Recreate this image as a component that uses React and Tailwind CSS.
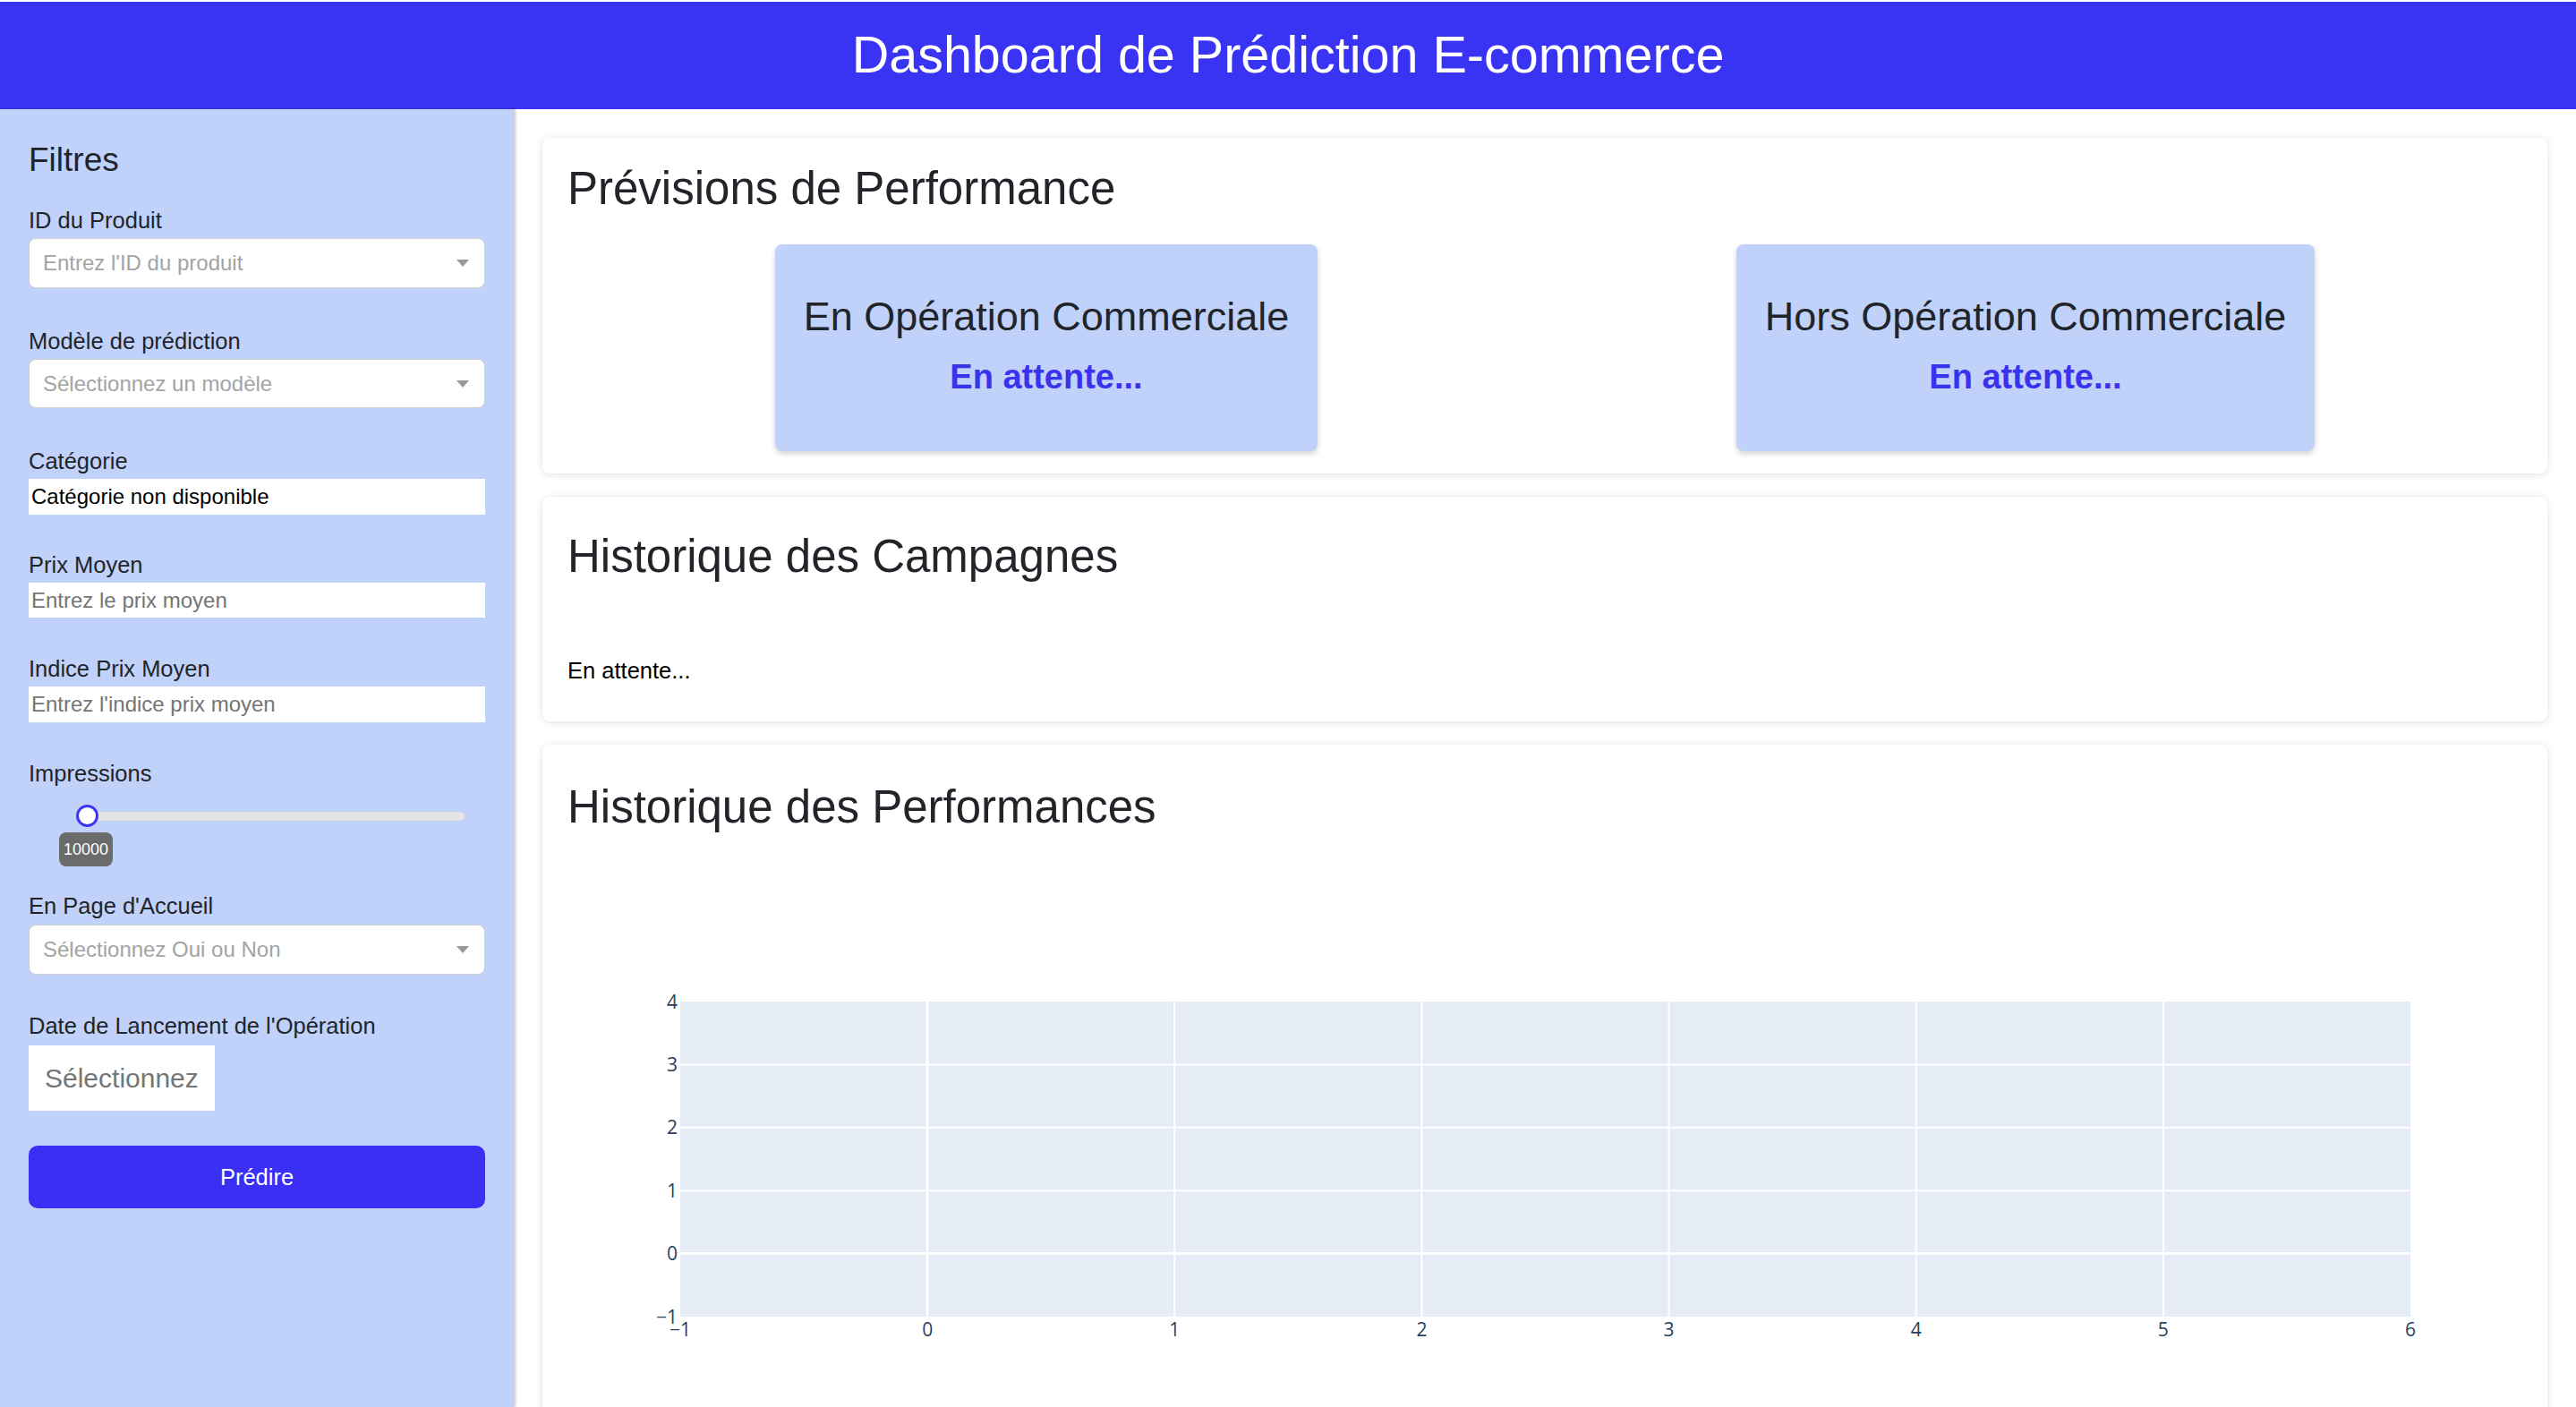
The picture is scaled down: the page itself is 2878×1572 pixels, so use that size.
const FONT = { fontFamily: '"Liberation Sans", Arial, sans-serif' };

const Label = ({ children, className = '' }) => (
  <div className={`text-[25.5px] leading-[39px] text-[#212529] ${className}`}>{children}</div>
);

const Dropdown = ({ placeholder, className = '' }) => (
  <div
    className={`flex items-center justify-between rounded-[8px] border border-[#cfcfcf] bg-white pl-[15px] pr-[17px] ${className}`}
  >
    <span className="text-[24px] text-[#a3a3a3]">{placeholder}</span>
    <span className="h-0 w-0 border-l-[7px] border-r-[7px] border-t-[8px] border-l-transparent border-r-transparent border-t-[#999999]" />
  </div>
);

const TextBox = ({ children, placeholder, className = '' }) => (
  <div className={`flex items-center bg-white pl-[3px] text-[24px] ${className}`}>
    {children ? <span className="text-black">{children}</span> : <span className="text-[#757575]">{placeholder}</span>}
  </div>
);

const Sidebar = () => (
  <aside className="relative z-10 flex w-[574px] shrink-0 flex-col bg-[#c0d1fa] px-[32px] pt-[35px] shadow-[2px_0_3px_rgba(0,0,0,0.22)]">
    <h3 className="text-[37px] leading-[44px] text-[#212529]">Filtres</h3>

    <Label className="mt-[26px]">ID du Produit</Label>
    <Dropdown placeholder="Entrez l'ID du produit" className="h-[56px]" />

    <Label className="mt-[40px]">Modèle de prédiction</Label>
    <Dropdown placeholder="Sélectionnez un modèle" className="h-[55px]" />

    <Label className="mt-[40px]">Catégorie</Label>
    <TextBox className="h-[40px]">Catégorie non disponible</TextBox>

    <Label className="mt-[37px]">Prix Moyen</Label>
    <TextBox placeholder="Entrez le prix moyen" className="h-[39px]" />

    <Label className="mt-[38px]">Indice Prix Moyen</Label>
    <TextBox placeholder="Entrez l'indice prix moyen" className="h-[40px]" />

    <Label className="mt-[38px]">Impressions</Label>
    {/* slider */}
    <div className="h-[109px] pl-[53px] pr-[23px]">
      <div className="relative h-full">
        <div className="absolute left-0 right-0 top-[23px] h-[10px] rounded-full bg-[#e5e5e5]" />
        <div className="absolute left-0 top-[15px] h-[25px] w-[25px] rounded-full border-[3px] border-[#3b34f5] bg-white" />
        <div className="absolute left-[-19px] top-[46px] flex h-[38px] w-[60px] items-center justify-center rounded-[8px] bg-[#6b6b6b] text-[18px] text-white">
          10000
        </div>
      </div>
    </div>

    <Label>En Page d'Accueil</Label>
    <Dropdown placeholder="Sélectionnez Oui ou Non" className="mt-[1px] h-[56px]" />

    <Label className="mt-[38px]">Date de Lancement de l'Opération</Label>
    <div className="mt-[2px] flex h-[73px] w-[208px] items-center bg-white pl-[18px] text-[30px] text-[#757575]">
      Sélectionnez
    </div>

    <button className="mt-[39px] h-[70px] rounded-[10px] bg-[#3a2ff5] text-[25.5px] text-white">Prédire</button>
  </aside>
);

const Card = ({ className = '', children }) => (
  <section className={`rounded-[8px] bg-white px-[28px] shadow-[0_1px_8px_rgba(0,0,0,0.13)] ${className}`}>{children}</section>
);

const CardTitle = ({ children }) => <h2 className="text-[51px] leading-[61px] text-[#212529]">{children}</h2>;

const ForecastBox = ({ title }) => (
  <div className="h-[231px] rounded-[8px] bg-[#c0d1fa] px-[32px] pt-[54px] text-center shadow-[0_3px_6px_rgba(0,0,0,0.18)]">
    <div className="text-[45px] leading-[54px] text-[#212529]">{title}</div>
    <div className="mt-[17px] text-[38px] font-bold leading-[46px] text-[#3a33ee]">En attente...</div>
  </div>
);

const Chart = () => {
  const xs = [-1, 0, 1, 2, 3, 4, 5, 6];
  const ys = [4, 3, 2, 1, 0, -1];
  const left = 126;
  const right = 2059;
  const top = 187;
  const bottom = 539;
  const sx = (v) => left + ((v + 1) * (right - left)) / 7;
  const sy = (v) => top + ((4 - v) * (bottom - top)) / 5;
  const tick = { fontFamily: '"Open Sans", Verdana, Arial, sans-serif', fontSize: 21, fill: '#2a3f5f' };
  const fmt = (v) => (v < 0 ? `\u2212${-v}` : `${v}`);

  return (
    <svg width="2184" height="660" className="block">
      <rect x={left} y={top} width={right - left} height={bottom - top} fill="#e5ecf6" />
      {xs.slice(1, -1).map((v) => (
        <line key={`gx${v}`} x1={sx(v)} x2={sx(v)} y1={top} y2={bottom} stroke="#ffffff" strokeWidth={v === 0 ? 3 : 2} />
      ))}
      {ys.slice(1, -1).map((v) => (
        <line key={`gy${v}`} x1={left} x2={right} y1={sy(v)} y2={sy(v)} stroke="#ffffff" strokeWidth={v === 0 ? 3 : 2} />
      ))}
      {ys.map((v) => (
        <text key={`ty${v}`} x={left - 3} y={sy(v) + 7.5} textAnchor="end" style={tick}>
          {fmt(v)}
        </text>
      ))}
      {xs.map((v) => (
        <text key={`tx${v}`} x={sx(v)} y={561} textAnchor="middle" style={tick}>
          {fmt(v)}
        </text>
      ))}
    </svg>
  );
};

export default function App() {
  return (
    <div className="flex h-screen flex-col overflow-hidden bg-white" style={FONT}>
      <header className="mt-[2px] flex h-[120px] shrink-0 items-center justify-center bg-[#3933f4]">
        <h1 className="text-[57.5px] leading-none text-white">Dashboard de Prédiction E-commerce</h1>
      </header>

      <div className="flex min-h-0 flex-1">
        <Sidebar />

        <main className="min-w-0 flex-1 overflow-hidden px-[32px] pt-[32px]">
          <Card className="pb-[25px] pt-[26px]">
            <CardTitle>Prévisions de Performance</CardTitle>
            <div className="ml-[-12px] mt-[32px] flex">
              <div className="flex w-[1094px] justify-center">
                <ForecastBox title="En Opération Commerciale" />
              </div>
              <div className="flex w-[1094px] justify-center">
                <ForecastBox title="Hors Opération Commerciale" />
              </div>
            </div>
          </Card>

          <Card className="mt-[26px] pb-[37px] pt-[36px]">
            <CardTitle>Historique des Campagnes</CardTitle>
            <p className="mt-[78px] text-[25.5px] leading-[39px] text-black">En attente...</p>
          </Card>

          <Card className="mt-[26px] pt-[39px]">
            <CardTitle>Historique des Performances</CardTitle>
            <Chart />
          </Card>
        </main>
      </div>
    </div>
  );
}
